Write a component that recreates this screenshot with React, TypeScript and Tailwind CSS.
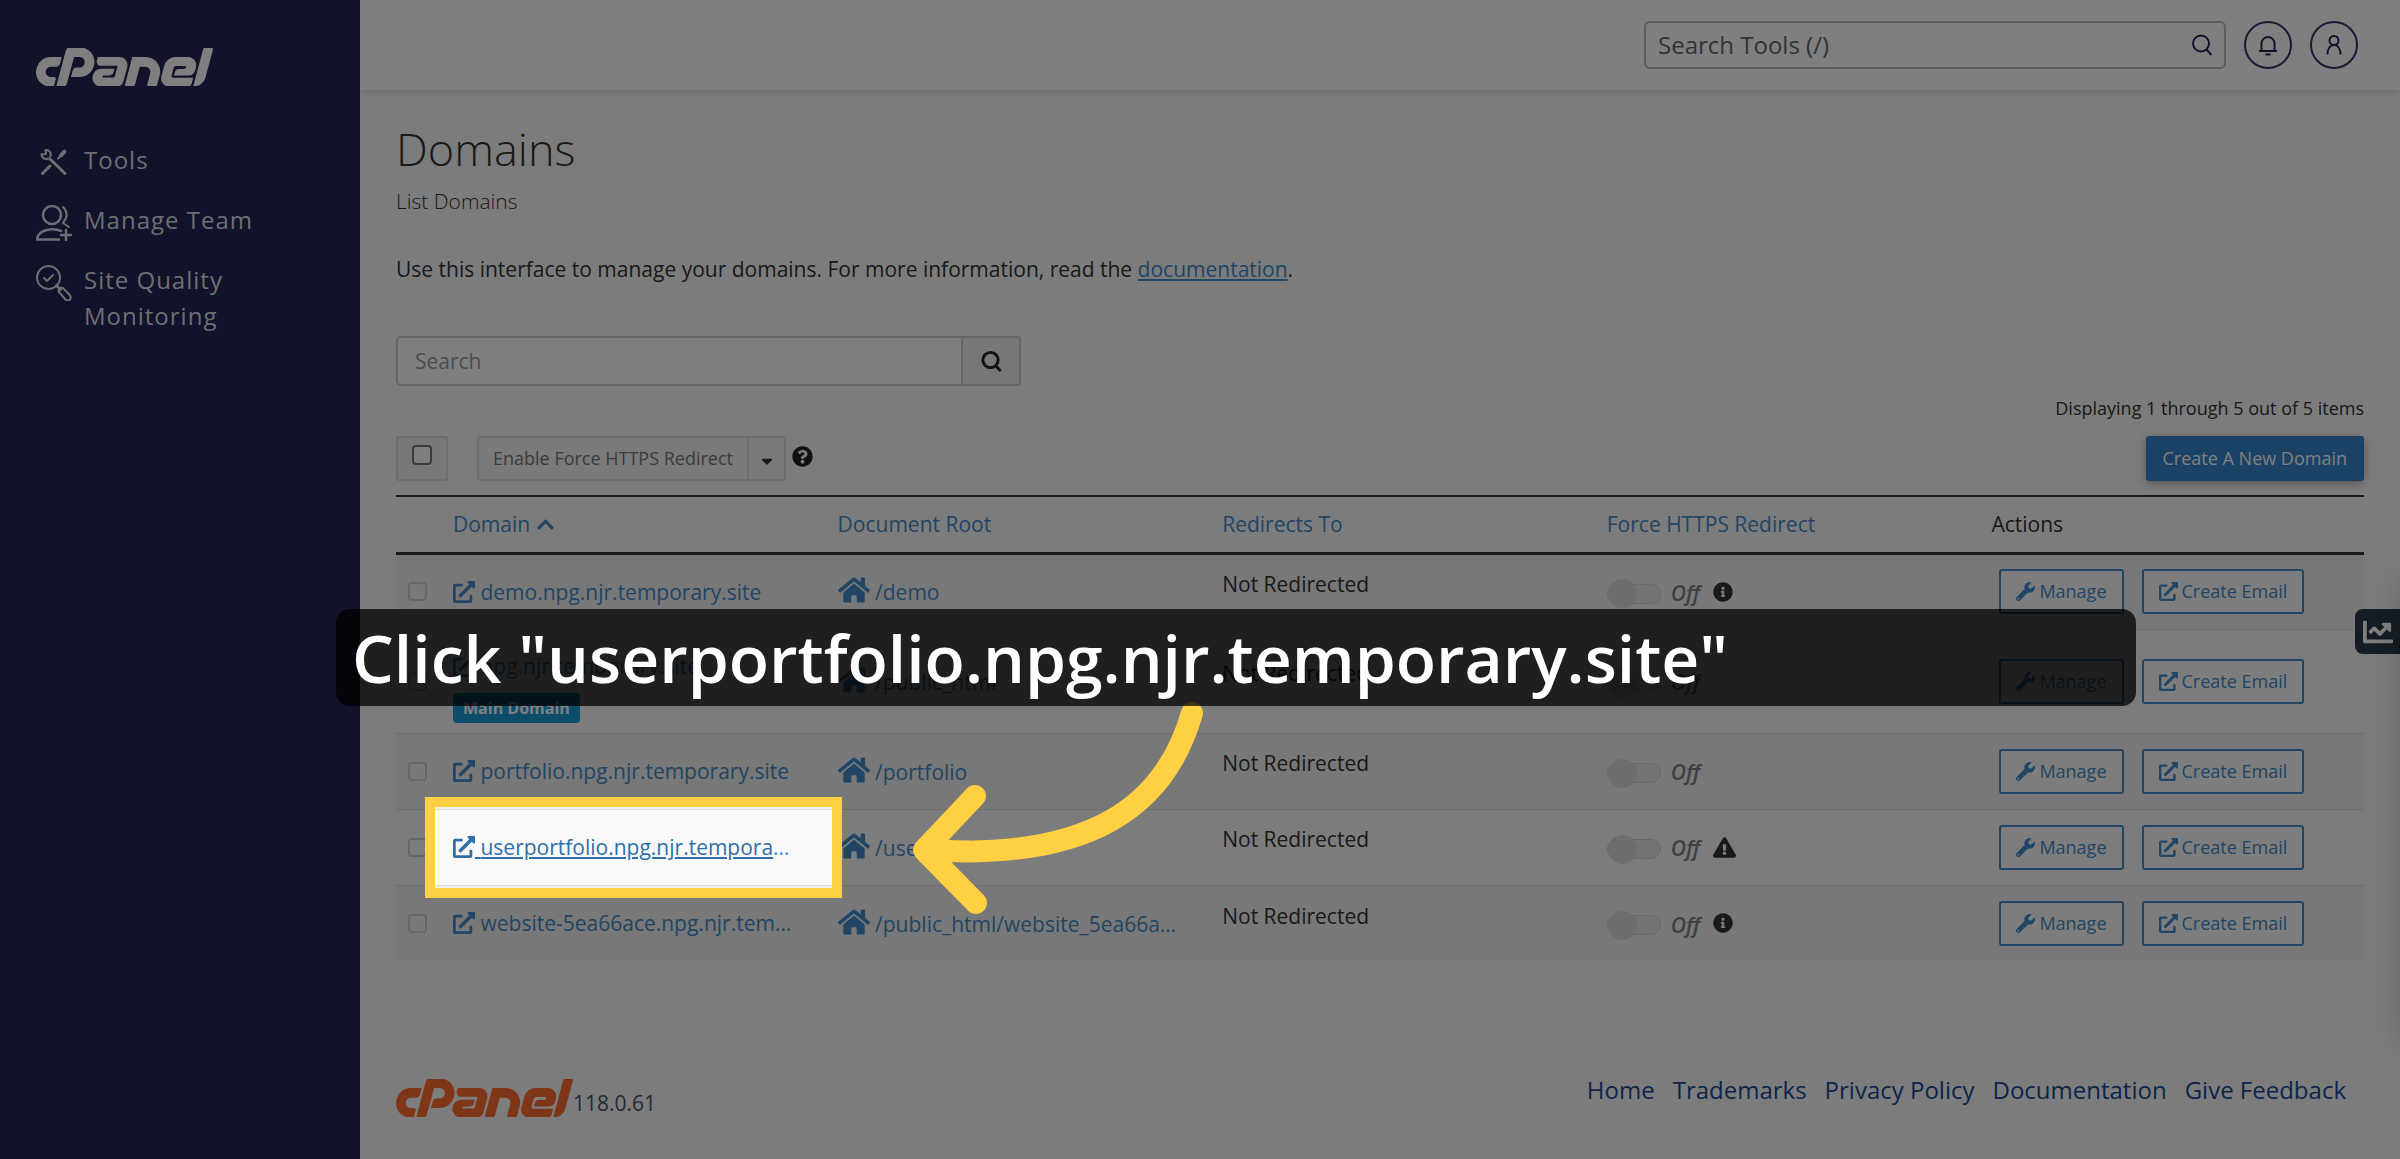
import type { ReactNode } from "react";
import { FaCaretDown, FaChartLine, FaChevronUp, FaExclamationTriangle, FaExternalLinkAlt, FaHome, FaInfoCircle, FaQuestionCircle, FaWrench } from "react-icons/fa";
import { SiCpanel } from "react-icons/si";

type Domain = {
  name: string;
  root: string;
  main?: boolean;
  highlighted?: boolean;
  status?: "info" | "warning";
};

const domains: Domain[] = [
  { name: "demo.npg.njr.temporary.site", root: "/demo", status: "info" },
  { name: "npg.njr.temporary.site", root: "/public_html", main: true },
  { name: "portfolio.npg.njr.temporary.site", root: "/portfolio" },
  { name: "userportfolio.npg.njr.temporary.site", root: "/userportfolio", highlighted: true, status: "warning" },
  { name: "website-5ea66ace.npg.njr.temporary.site", root: "/public_html/website_5ea66ace", status: "info" },
];

const footerLinks = ["Home", "Trademarks", "Privacy Policy", "Documentation", "Give Feedback"];

const CpanelLogo = ({ className }: { className: string }) => (
  <SiCpanel viewBox="0 9.44 24 5.12" className={className} aria-label="cPanel" />
);

const ToolsIcon = () => (
  <svg viewBox="0 0 36 36" className="mt-[3px] size-9 shrink-0" fill="none" stroke="currentColor" strokeLinecap="round" strokeLinejoin="round">
    <path d="M14 14 29 28.500" strokeWidth="3" />
    <path d="M9.500 5a4.500 4.500 0 0 1 4.500 7M5.500 9a4.500 4.500 0 0 0 6.500 4.500M9.500 5l.5 4-4 .5" strokeWidth="2" />
    <path d="m6.500 28.500 7.500-7.500" strokeWidth="3" />
    <path d="m22 13.500 3-3" strokeWidth="2" />
    <path d="m25 10.500 3.500-4" strokeWidth="4" />
  </svg>
);

const TeamIcon = () => (
  <svg viewBox="0 0 36 36" className="mt-[3px] size-9 shrink-0" fill="none" stroke="currentColor" strokeWidth="2.500" strokeLinecap="round" strokeLinejoin="round">
    <circle cx="16" cy="10" r="9" />
    <path d="M27 2c5 5 5 10 0 16l6 4" strokeWidth="2" />
    <path d="M25 26c-8-3.500-22-1.500-24 7.500v1h22" />
    <path d="M30 25v10M25 30h10" />
  </svg>
);

const QualityIcon = () => (
  <svg viewBox="0 0 36 36" className="mt-[3px] size-9 shrink-0" fill="none" stroke="currentColor" strokeWidth="2" strokeLinecap="round" strokeLinejoin="round">
    <circle cx="12.500" cy="12.500" r="11.500" />
    <path d="m8 13 3 3 6-6" />
    <path d="m20.500 20.500 4 4" strokeWidth="3" />
    <path d="m27 23 7 7.500a3 3 0 0 1-4.500 4l-6.500-7.500a3 3 0 0 1 4-4Z" />
  </svg>
);

const SearchIcon = ({ className }: { className: string }) => (
  <svg viewBox="0 0 24 24" className={className} fill="none" stroke="currentColor">
    <circle cx="11" cy="10.500" r="8" />
    <path d="m16 16 5.500 6" />
  </svg>
);

const navItems: { label: string; icon: ReactNode }[] = [
  { label: "Tools", icon: <ToolsIcon /> },
  { label: "Manage Team", icon: <TeamIcon /> },
  { label: "Site Quality Monitoring", icon: <QualityIcon /> },
];

const Sidebar = () => (
  <aside className="w-[360px] shrink-0 bg-[#222654] px-9 pt-12 text-white">
    <CpanelLogo className="h-[38px] w-[177px]" />
    <nav className="mt-11 flex flex-col">
      {navItems.map(item => (
        <a key={item.label} href="#" className="flex gap-3 pt-3 pb-[9px] text-[24px] leading-[36px] font-medium tracking-[1px] text-[#dcdde4]">
          {item.icon}
          <span className="w-[180px]">{item.label}</span>
        </a>
      ))}
    </nav>
  </aside>
);

const Header = () => (
  <header className="flex h-[90px] items-center justify-end gap-[18px] bg-white px-[42px] text-[#222654] shadow-[0_2px_6px_rgba(0,0,0,0.12)]">
    <div className="flex h-12 w-[582px] items-center rounded-[6px] border-2 border-[#b4b4c6] pr-[10px] pl-3">
      <input type="text" aria-label="Search Tools" placeholder="Search Tools (/)" className="min-w-0 flex-1 text-[24px] outline-none placeholder:text-[#666]" />
      <SearchIcon className="size-6 stroke-2" />
    </div>
    <button type="button" aria-label="Notifications" className="flex size-12 items-center justify-center rounded-full border-2 border-[#33366a]">
      <svg viewBox="0 0 24 24" className="size-6" fill="none" stroke="currentColor" strokeWidth="2">
        <path d="M5.500 18V10.500a6.500 6.500 0 0 1 13 0V18M3 18h18M9.500 21.500h5" />
      </svg>
    </button>
    <button type="button" aria-label="Account" className="flex size-12 items-center justify-center rounded-full border-2 border-[#33366a]">
      <svg viewBox="0 0 24 24" className="size-6" fill="none" stroke="currentColor" strokeWidth="2">
        <circle cx="12" cy="7.500" r="4.500" />
        <path d="M5.500 21.500c0-5.500 2.500-9.500 6.500-9.500s6.500 4 6.500 9.500" />
      </svg>
    </button>
  </header>
);

// Everything outside the ring is dimmed by its spread shadow
const HighlightRing = () => (
  <div className="pointer-events-none absolute inset-x-[-16px] inset-y-[-13px] z-10 border-10 border-[#ffd043] shadow-[0_0_0_3000px_rgba(0,0,0,0.5)]" />
);

const StatusIcon = ({ status }: { status: Domain["status"] }) => {
  if (status === "info") return <FaInfoCircle className="mb-1 size-5 text-[#333]" />;
  if (status === "warning") return <FaExclamationTriangle className="mb-1 size-[23px] text-[#333]" />;
  return null;
};

const DomainRow = ({ domain }: { domain: Domain }) => (
  <tr className={domain.main ? "h-[104px] border-t border-[#ddd] odd:bg-[#f0f0f0]" : "h-[76px] border-t border-[#ddd] odd:bg-[#f0f0f0]"}>
    <td className="pl-3">
      <input type="checkbox" aria-label={`Select ${domain.name}`} className="block size-[19px] appearance-none rounded-[4px] border-2 border-[#ccc]" />
    </td>
    <td className={domain.main ? "px-3 pt-3" : "relative px-3"}>
      <div className="max-w-[339px] truncate text-[21px] leading-[30px] text-[#428bca]">
        <a href="#" className={domain.highlighted ? "text-[#2f6fa8] underline" : "no-underline"}>
          <FaExternalLinkAlt className="inline size-[22px] align-[-3px]" /> {domain.name}
        </a>
      </div>
      {domain.main && (
        <span className="mt-3 block w-fit rounded-[4px] bg-[#179bd7] px-[10px] text-[16px] leading-[30px] font-bold text-white">Main Domain</span>
      )}
      {domain.highlighted && <HighlightRing />}
    </td>
    <td className="px-3">
      <div className="max-w-[339px] truncate text-[21px] leading-[34px] text-[#428bca]">
        <a href="#">
          <FaHome className="inline size-8 align-[-6px]" /> {domain.root}
        </a>
      </div>
    </td>
    <td className="px-3 pb-[14px] text-[21px]">Not Redirected</td>
    <td className="px-3">
      <div className="flex items-center gap-[10px] pt-1">
        <button type="button" role="switch" aria-checked="false" aria-label="Force HTTPS Redirect" className="flex h-5 w-[54px] items-center rounded-full border border-[#d0d0d0] bg-[#e6e6e6]">
          <span className="size-[29px] shrink-0 rounded-full bg-[#dadada]" />
        </button>
        <span className="w-8 text-[21px] font-semibold text-[#808080] italic">Off</span>
        <StatusIcon status={domain.status} />
      </div>
    </td>
    <td className="px-3">
      <div className="flex gap-[18px] pl-2 text-[18px] text-[#428bca]">
        <button type="button" className="flex h-[45px] items-center gap-1 rounded-[3px] border-2 border-[#428bca] bg-[#fafafa] px-[15px]">
          <FaWrench className="size-[19px]" />
          Manage
        </button>
        <button type="button" className="flex h-[45px] items-center gap-1 rounded-[3px] border-2 border-[#428bca] bg-[#fafafa] px-[15px]">
          <FaExternalLinkAlt className="size-[19px]" />
          Create Email
        </button>
      </div>
    </td>
  </tr>
);

const DomainTable = () => (
  <table className="mt-[14px] w-full table-fixed border-collapse border-t-2 border-[#333]">
    <thead>
      <tr className="h-[57px] border-b-3 border-[#333] text-left text-[21px] text-[#428bca] [&>th]:font-normal">
        <th className="w-[45px]"></th>
        <th className="px-3">
          <button type="button" className="flex items-center gap-[6px]">Domain <FaChevronUp className="size-[19px]" /></button>
        </th>
        <th className="px-3">Document Root</th>
        <th className="px-3">Redirects To</th>
        <th className="px-3">Force HTTPS Redirect</th>
        <th className="px-3 text-[#333]">Actions</th>
      </tr>
    </thead>
    <tbody>
      {domains.map(domain => <DomainRow key={domain.name} domain={domain} />)}
    </tbody>
  </table>
);

const Toolbar = () => (
  <div className="mt-[15px] flex h-[45px] items-stretch text-[18px]">
    <label className="flex w-[52px] justify-center rounded-[3px] border-2 border-[#ddd] bg-[#f0f0f0] pt-[7px]">
      <input type="checkbox" aria-label="Select all domains" className="size-5 appearance-none rounded-[4px] border-2 border-[#777] bg-white" />
    </label>
    <div className="ml-[29px] flex rounded-[3px] border-2 border-[#ddd] bg-[#f5f5f5]">
      <button type="button" className="px-[14px] text-[#777]">Enable Force HTTPS Redirect</button>
      <button type="button" aria-label="More actions" className="flex w-[37px] items-center justify-center border-l-2 border-[#ddd] pt-1 text-[#333]">
        <FaCaretDown className="size-[18px]" />
      </button>
    </div>
    <FaQuestionCircle className="mt-[10px] ml-[6px] size-[21px] text-[#222]" />
    <button type="button" className="ml-auto rounded-[3px] bg-[#3584cc] px-[17px] text-white shadow-[0_3px_8px_rgba(0,0,0,0.3)]">Create A New Domain</button>
  </div>
);

const Footer = () => (
  <footer className="mt-[118px] flex items-start justify-between pb-10">
    <div className="flex items-end">
      <CpanelLogo className="h-[38px] w-[177px] text-[#ff6c2c]" />
      <span className="text-[21px] leading-[27px] text-[#4a5568]">118.0.61</span>
    </div>
    <nav className="flex gap-[18px] pr-[18px] text-[24px] leading-[22px] text-[#174a98]">
      {footerLinks.map(link => <a key={link} href="#">{link}</a>)}
    </nav>
  </footer>
);

const Arrow = () => (
  <svg viewBox="0 0 292 214" className="absolute top-[701px] left-[912px] w-[292px]" fill="none" stroke="#ffd043" strokeWidth="22" strokeLinecap="round" strokeLinejoin="round">
    <path d="M280 12C253 106 178 160 14 149" />
    <path d="M63 95 12 149l52 53" />
  </svg>
);

const App = () => (
  <div className="relative flex min-h-screen overflow-hidden bg-[#f9f9f9] font-['Open_Sans',sans-serif] text-[#333]">
    <Sidebar />
    <div className="min-w-0 flex-1">
      <Header />
      <main className="px-9 pt-8">
        <h1 className="text-[45px] leading-[54px] font-light">Domains</h1>
        <p className="mt-[10px] text-[21px] leading-[30px] font-light">List Domains</p>
        <p className="mt-[38px] text-[21px] leading-[30px]">
          Use this interface to manage your domains. For more information, read the <a href="#" className="text-[#428bca] underline">documentation</a>.
        </p>
        <div className="mt-[52px] flex h-[50px] w-[625px]">
          <input type="search" aria-label="Search" placeholder="Search" className="min-w-0 flex-1 rounded-l-[5px] border-2 border-[#ccc] bg-white px-[17px] pt-[2px] text-[21px] placeholder:text-[#999]" />
          <button type="button" aria-label="Search domains" className="flex w-[58px] items-center justify-center rounded-r-[3px] border-2 border-l-0 border-[#ccc] bg-[#eee] text-[#222]">
            <SearchIcon className="size-[23px] stroke-3" />
          </button>
        </div>
        <p className="mt-[9px] text-right text-[18px] leading-[26px]">Displaying 1 through 5 out of 5 items</p>
        <Toolbar />
        <DomainTable />
        <Footer />
      </main>
    </div>
    <button type="button" aria-label="Open analytics" className="absolute top-[609px] right-0 flex h-[45px] w-[45px] items-center justify-center rounded-l-[8px] bg-[#293a4a] text-white">
      <FaChartLine className="size-[30px]" />
    </button>
    {/* closed analytics drawer, only its shadow reaches the page */}
    <div className="absolute top-[580px] left-full h-[460px] w-10 shadow-[0_0_30px_rgba(0,0,0,0.2)]" />
    <div className="absolute inset-0 z-20">
      <Arrow />
      <div className="absolute top-[609px] left-[14%] w-[75%] rounded-[14px] bg-black/75 px-4 text-[66px] leading-[97px] font-semibold text-white">
        Click "userportfolio.npg.njr.temporary.site"
      </div>
    </div>
  </div>
);

export default App;
